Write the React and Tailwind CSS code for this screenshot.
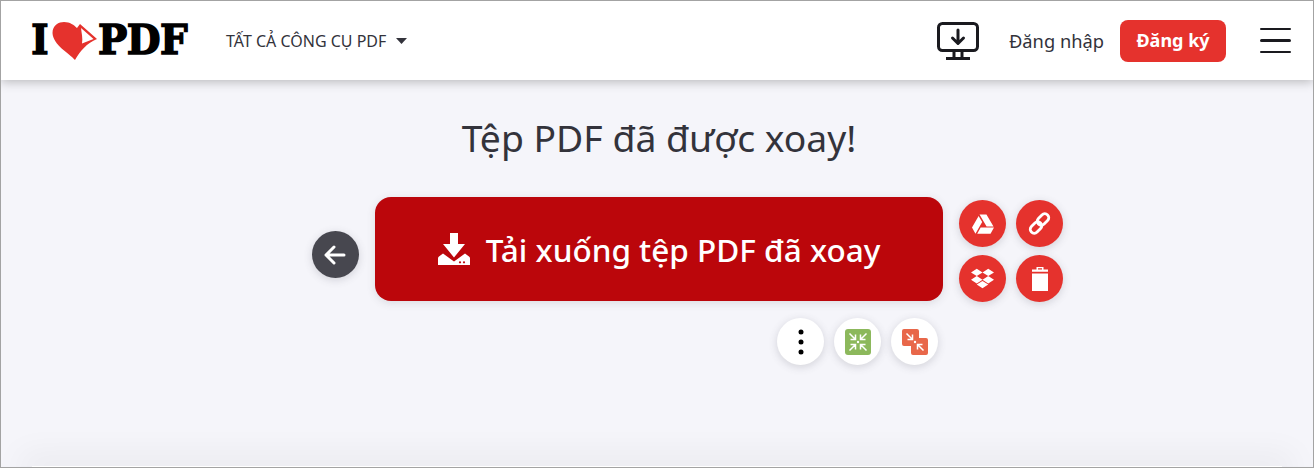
import React from "react";
import { FaGoogleDrive, FaDropbox } from "react-icons/fa";

function Logo() {
  return (
    <div className="flex items-center w-[157px] h-[40px] font-['DejaVu_Serif',serif] font-bold text-black text-[41px] leading-none">
      <span className="ml-[2px] w-[16px] flex justify-center [-webkit-text-stroke:1.5px_black] scale-x-[0.9]">I</span>
      <svg width="46" height="40" viewBox="0 0 46 40" className="shrink-0 ml-[4px]">
        <path d="M23 39C17 32 1 24 .5 12 .5 4 7 1 12 1c6 0 10 3 13 6l3-4 17 15c-10 4-17 12-22 21z" fill="#e5322d" />
        <path d="M29 7 41.500 18 30 22.500C31 17 29.500 12 29 7z" fill="#fff" />
      </svg>
      <span className="[-webkit-text-stroke:1.5px_black] origin-left scale-x-[0.95] tracking-[-0.5px]">PDF</span>
    </div>
  );
}

const Circle = ({ className = "", children }) => (
  <button className={`w-[47px] h-[47px] rounded-full flex items-center justify-center shadow-[0_2px_8px_rgba(72,72,83,0.2)] ${className}`}>
    {children}
  </button>
);

export default function App() {
  return (
    <div className="relative w-[1314px] h-[468px] overflow-hidden flex flex-col bg-[#f5f5fa] border border-[#a3a3a3] font-['Noto_Sans',sans-serif]">
      <header className="h-[79px] shrink-0 bg-white shadow-[0_2px_10px_rgba(0,0,0,0.25)] flex items-center pl-[29px] pr-[22px] z-10">
        <Logo />
        <div className="ml-[39px] flex items-center text-[16px] text-[#33333b]">
          <span>TẤT CẢ CÔNG CỤ PDF</span>
          <svg width="11" height="6" viewBox="0 0 11 6" className="ml-[10px]"><path d="M0 0h11L5.500 6z" fill="#33333b" /></svg>
        </div>
        <svg width="42" height="38" viewBox="0 0 42 38" className="ml-auto" fill="none" stroke="#1a1a1f" strokeWidth="3">
          <rect x="1.500" y="1.500" width="39" height="27" rx="4" />
          <path d="M21 8v13M15.500 16l5.500 5.500 5.500-5.500" strokeLinecap="round" strokeLinejoin="round" />
          <path d="M17 29v7M25 29v7M9 36.500h24" />
        </svg>
        <span className="ml-[30px] text-[18.3px] text-[#33333b]">Đăng nhập</span>
        <button className="ml-[16px] w-[106px] h-[42px] rounded-[8px] bg-[#e5322d] text-white text-[18px] font-bold">Đăng ký</button>
        <div className="ml-[34px] w-[31px] flex flex-col gap-[9px]">
          <div className="h-[2.5px] rounded-full bg-[#1a1a1f]" />
          <div className="h-[2.5px] rounded-full bg-[#1a1a1f]" />
          <div className="h-[2.5px] rounded-full bg-[#1a1a1f]" />
        </div>
      </header>

      <main className="flex-1 flex flex-col">
        <h1 className="mt-[33px] text-center text-[37.3px] pl-[4px] leading-[50px] text-[#33333b]">Tệp PDF đã được xoay!</h1>
        <div className="mt-[34px] pl-[311px] flex items-start">
          <Circle className="mt-[34px] bg-[#47474f]">
            <svg width="22" height="22" viewBox="0 0 22 22" className="-ml-[2px]" fill="none" stroke="#fff" strokeWidth="3" strokeLinecap="round" strokeLinejoin="round">
              <path d="M20 11H2M10 3l-8 8 8 8" />
            </svg>
          </Circle>
          <button className="ml-[16px] w-[568px] h-[104px] rounded-[16px] bg-[#bb060b] text-white flex items-center justify-center shadow-[0_2px_8px_rgba(72,72,83,0.15)]">
            <svg width="32" height="32" viewBox="0 0 32 32" className="mr-[16px]" fill="#fff">
              <path d="M12 0h8v11h7L16 24.500 5 11h7z" />
              <path d="M1 23.500 5 20.500l11 8 11-8 4 3q1 .7 1 2V32H0v-6.500q0-1.300 1-2z" />
              <circle cx="22" cy="29.300" r="1.100" fill="#bb060b" />
              <circle cx="26" cy="29.300" r="1.100" fill="#bb060b" />
            </svg>
            <span className="text-[31.5px] font-medium leading-none pt-[1px]">Tải xuống tệp PDF đã xoay</span>
          </button>
          <div className="ml-[16px] mt-[3px] grid grid-cols-2 gap-x-[10px] gap-y-[8px]">
            <Circle className="bg-[#e5322d]"><FaGoogleDrive size={22} color="#fff" /></Circle>
            <Circle className="bg-[#e5322d]">
              <svg width="23" height="23" viewBox="0 0 23 23" fill="none" stroke="#fff" strokeWidth="2.800">
                <rect x="8.500" y="3.500" width="13" height="8" rx="4" transform="rotate(-45 15 7.500)" />
                <rect x="1.500" y="11.500" width="13" height="8" rx="4" transform="rotate(-45 8 15.500)" />
              </svg>
            </Circle>
            <Circle className="bg-[#e5322d]"><FaDropbox size={23} color="#fff" /></Circle>
            <Circle className="bg-[#e5322d]">
              <svg width="16" height="24" viewBox="0 0 16 24" fill="#fff">
                <path d="M0 6.500h16V24H0zM0 2.500h4.500V0h7v2.500H16v2.300H0zM6 1.200v1.300h4V1.200z" fillRule="evenodd" />
              </svg>
            </Circle>
          </div>
        </div>
        <div className="mt-[16px] ml-[776px] flex gap-[10px]">
          <Circle className="bg-white">
            <svg width="6" height="26" viewBox="0 0 6 26" fill="#000">
              <circle cx="3" cy="3" r="2.500" /><circle cx="3" cy="13" r="2.500" /><circle cx="3" cy="23" r="2.500" />
            </svg>
          </Circle>
          <Circle className="bg-white">
            <svg width="26" height="26" viewBox="0 0 26 26">
              <rect width="26" height="26" rx="3" fill="#8cb85c" />
              <g fill="none" stroke="#fff" strokeWidth="1.500">
                <path d="M4.500 4.500 10 10M10.500 5.500v5h-5M21.500 4.500 16 10M15.500 5.500v5h5M4.500 21.500 10 16M10.500 20.500v-5h-5M21.500 21.500 16 16M15.500 20.500v-5h5" />
              </g>
              <circle cx="13" cy="13" r="1.200" fill="#fff" />
            </svg>
          </Circle>
          <Circle className="bg-white">
            <svg width="26" height="26" viewBox="0 0 26 26">
              <path d="M2 0h13a2 2 0 0 1 2 2v7h7a2 2 0 0 1 2 2v13a2 2 0 0 1-2 2H11a2 2 0 0 1-2-2v-7H2a2 2 0 0 1-2-2V2a2 2 0 0 1 2-2z" fill="#e8674a" />
              <g fill="none" stroke="#fff" strokeWidth="1.500">
                <path d="M4.500 4.500 10 10M10.500 5.500v5h-5M21.500 21.500 16 16M15.500 20.500v-5h5" />
              </g>
              <circle cx="13" cy="13" r="1.200" fill="#fff" />
            </svg>
          </Circle>
        </div>
        <div className="mt-auto mx-[31px] h-[1px] bg-white shadow-[0_0_32px_12px_rgba(0,0,0,0.05)]" />
      </main>
    </div>
  );
}
